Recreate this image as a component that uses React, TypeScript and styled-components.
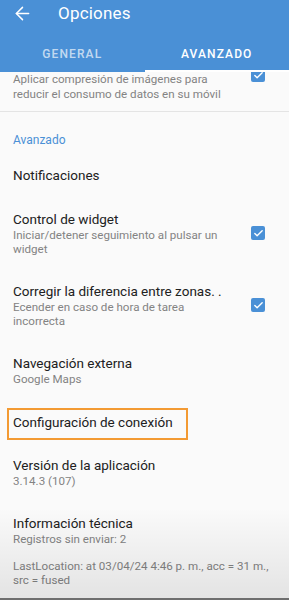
import React from 'react';
import styled, { createGlobalStyle } from 'styled-components';
import { ArrowLeft, Check } from 'lucide-react';

const BLUE = '#4a90d6';

const GlobalStyle = createGlobalStyle`
  html, body {
    margin: 0;
    padding: 0;
    background: #fafafa;
    font-family: Roboto, "Noto Sans", "Liberation Sans", sans-serif;
  }
`;

const Screen = styled.div`
  position: relative;
  width: 289px;
  height: 600px;
  display: flex;
  flex-direction: column;
  overflow: hidden;
  background: #fafafa;
`;

const Header = styled.header`
  position: relative;
  z-index: 2;
  background: ${BLUE};
  color: #fff;
`;

const Toolbar = styled.div`
  height: 26px;
  display: flex;
  align-items: center;
  padding-left: 12px;
`;

const BackButton = styled.span`
  display: flex;
  align-items: center;
  width: 46px;
`;

const Title = styled.h1`
  margin: 0;
  font-size: 17px;
  font-weight: 400;
  line-height: 20px;
  letter-spacing: 0.2px;
`;

const Tabs = styled.div`
  display: grid;
  grid-template-columns: 1fr 1fr;
  height: 46px;
`;

const Tab = styled.div<{ $active?: boolean }>`
  display: flex;
  justify-content: center;
  box-sizing: border-box;
  padding-top: 21px;
  font-size: 12px;
  line-height: 14px;
  font-weight: 500;
  letter-spacing: 1.1px;
  color: ${(p) => (p.$active ? '#ffffff' : 'rgba(255, 255, 255, 0.68)')};
  border-bottom: 2px solid ${(p) => (p.$active ? '#ffffff' : 'transparent')};
`;

const List = styled.div`
  flex: 1;
  overflow: hidden;
`;

const Pref = styled.div<{ $pt?: number; $pb?: number; $pr?: number }>`
  display: flex;
  align-items: center;
  padding: ${(p) => p.$pt ?? 13}px ${(p) => p.$pr ?? 24}px ${(p) => p.$pb ?? 13}px 13px;
`;

const Texts = styled.div`
  flex: 1;
  min-width: 0;
`;

const PrefTitle = styled.div`
  font-size: 13.5px;
  line-height: 18px;
  color: #212121;
`;

const Summary = styled.div<{ $lh?: number }>`
  font-size: 11.6px;
  line-height: ${(p) => p.$lh ?? 14}px;
  color: #838383;
`;

const Box = styled.span<{ $offset?: number }>`
  flex: none;
  width: 14px;
  height: 14px;
  margin-left: 20px;
  margin-top: ${(p) => p.$offset ?? 0}px;
  border-radius: 2px;
  background: ${BLUE};
  display: flex;
  align-items: center;
  justify-content: center;
`;

const Divider = styled.div`
  height: 1px;
  background: #e4e4e4;
`;

const Category = styled.div`
  padding: 20px 13px 5px;
  font-size: 12px;
  line-height: 16px;
  color: ${BLUE};
`;

const Highlight = styled.div`
  display: inline-block;
  margin-left: -6px;
  padding: 3px 13px 7px 4px;
  border: 2px solid #f39a33;
`;

const Shade = styled.div`
  position: absolute;
  left: 0;
  right: 0;
  bottom: 0;
  height: 92px;
  box-sizing: border-box;
  background: linear-gradient(to bottom, rgba(0, 0, 0, 0), rgba(0, 0, 0, 0.09));
  border-bottom: 2px solid #6e6e6e;
  pointer-events: none;
`;

const Checkbox = ({ offset }: { offset?: number }) => (
  <Box $offset={offset}>
    <Check size={11} color="#fff" strokeWidth={3} />
  </Box>
);

export default function App() {
  return (
    <>
      <GlobalStyle />
      <Screen>
        <Header>
          <Toolbar>
            <BackButton>
              <ArrowLeft size={21} strokeWidth={1.7} />
            </BackButton>
            <Title>Opciones</Title>
          </Toolbar>
          <Tabs>
            <Tab>GENERAL</Tab>
            <Tab $active>AVANZADO</Tab>
          </Tabs>
        </Header>
        <List>
          <Pref $pt={0} $pb={9} style={{ alignItems: 'flex-start' }}>
            <Texts>
              <Summary $lh={15}>Aplicar compresión de imágenes para reducir el consumo de datos en su móvil</Summary>
            </Texts>
            <Checkbox offset={-4} />
          </Pref>
          <Divider />
          <Category>Avanzado</Category>
          <Pref>
            <Texts>
              <PrefTitle>Notificaciones</PrefTitle>
            </Texts>
          </Pref>
          <Pref>
            <Texts>
              <PrefTitle>Control de widget</PrefTitle>
              <Summary>Iniciar/detener seguimiento al pulsar un widget</Summary>
            </Texts>
            <Checkbox />
          </Pref>
          <Pref>
            <Texts>
              <PrefTitle>Corregir la diferencia entre zonas. .</PrefTitle>
              <Summary>Ecender en caso de hora de tarea incorrecta</Summary>
            </Texts>
            <Checkbox />
          </Pref>
          <Pref>
            <Texts>
              <PrefTitle>Navegación externa</PrefTitle>
              <Summary>Google Maps</Summary>
            </Texts>
          </Pref>
          <Pref $pt={9} $pb={3}>
            <Highlight>
              <PrefTitle>Configuración de conexión</PrefTitle>
            </Highlight>
          </Pref>
          <Pref>
            <Texts>
              <PrefTitle>Versión de la aplicación</PrefTitle>
              <Summary>3.14.3 (107)</Summary>
            </Texts>
          </Pref>
          <Pref $pb={0}>
            <Texts>
              <PrefTitle>Información técnica</PrefTitle>
              <Summary>Registros sin enviar: 2</Summary>
            </Texts>
          </Pref>
          <Pref $pt={13} $pr={13}>
            <Texts>
              <Summary>LastLocation: at 03/04/24 4:46 p. m., acc = 31 m., src = fused</Summary>
            </Texts>
          </Pref>
        </List>
        <Shade />
      </Screen>
    </>
  );
}
